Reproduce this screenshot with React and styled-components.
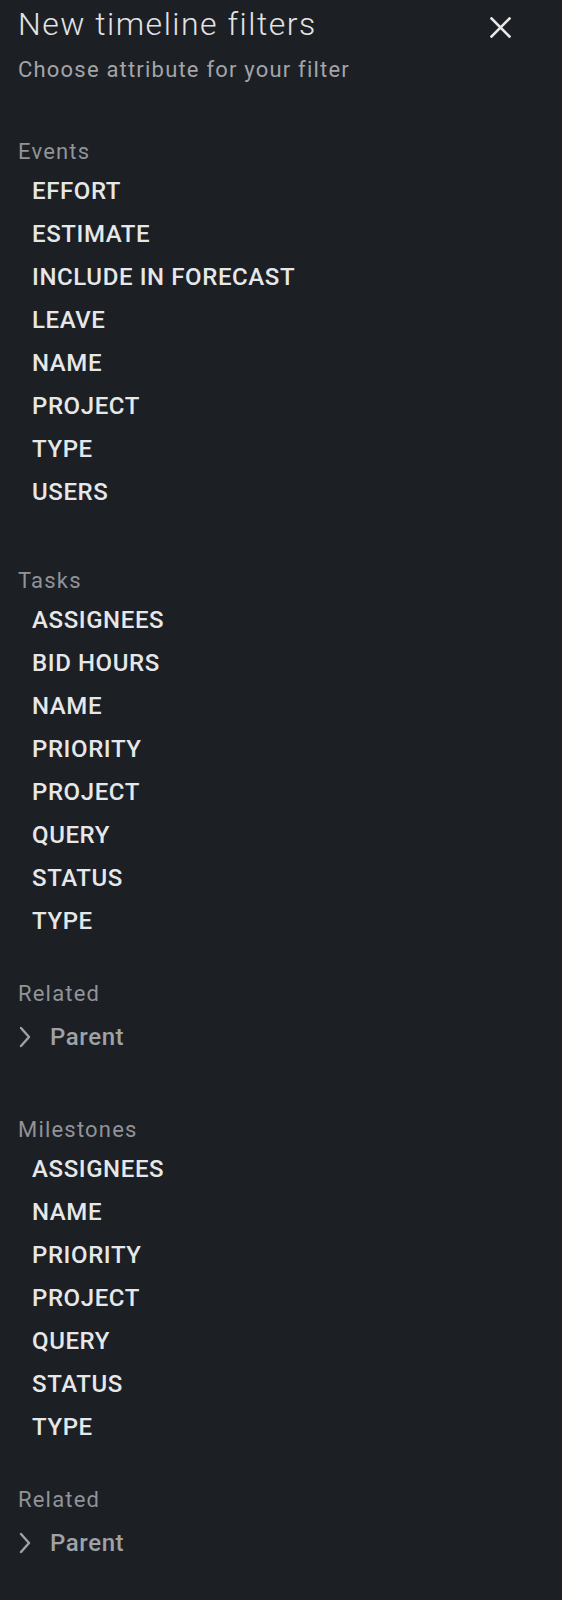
import React from 'react'
import styled, { createGlobalStyle } from 'styled-components'

const GlobalStyle = createGlobalStyle`
  html, body {
    margin: 0;
    padding: 0;
    background: #1c1f24;
  }
  body {
    font-family: Roboto, "Liberation Sans", sans-serif;
  }
`;

const Panel = styled.div`
  width: 562px;
  min-height: 1600px;
  box-sizing: border-box;
  padding: 4px 0 0 18px;
  background: #1c1f24;
  color: #e6e6e6;
`;

const Header = styled.div`
  display: flex;
  justify-content: space-between;
  align-items: flex-start;
`;

const Title = styled.h1`
  margin: 0;
  font-size: 32px;
  line-height: 40px;
  font-weight: 300;
  letter-spacing: 1.5px;
  color: #e2e3e5;
`;

const Subtitle = styled.p`
  margin: 12px 0 0;
  font-size: 22px;
  line-height: 28px;
  font-weight: 400;
  letter-spacing: 1.2px;
  color: #a3a5a9;
`;

const CloseButton = styled.button`
  display: flex;
  align-items: center;
  justify-content: center;
  width: 38px;
  height: 38px;
  margin: 4px 43px 0 0;
  padding: 0;
  border: none;
  background: transparent;
  color: #e8e8e8;
  cursor: pointer;
`;

const Section = styled.section`
  margin-top: ${({ $gap }) => $gap}px;
`;

const SectionLabel = styled.div`
  font-size: 22px;
  line-height: 36px;
  font-weight: 400;
  letter-spacing: 1.2px;
  color: #909397;
`;

const List = styled.ul`
  list-style: none;
  margin: 0;
  padding: 0 0 0 14px;
`;

const Item = styled.li`
  font-size: 24px;
  line-height: 43px;
  font-weight: 500;
  letter-spacing: 0.6px;
  color: #e6e7e9;
  cursor: pointer;
`;

const Related = styled.div`
  margin-top: 33px;
  padding-bottom: 5px;
`;

const ParentRow = styled.div`
  display: flex;
  align-items: center;
  gap: 18px;
  margin-top: 3px;
  height: 43px;
  font-size: 24px;
  font-weight: 500;
  letter-spacing: 0.6px;
  color: #a0a2a6;
  cursor: pointer;
`;

const Chevron = () => (
  <svg width="14" height="22" viewBox="0 0 14 22" fill="none">
    <path d="M3 2 L11 11 L3 20" stroke="#a0a2a6" strokeWidth="2.4" strokeLinecap="round" strokeLinejoin="round" />
  </svg>
);

const CloseIcon = () => (
  <svg width="21" height="21" viewBox="0 0 21 21" fill="none">
    <path d="M1.5 1.5 L19.5 19.5 M19.5 1.5 L1.5 19.5" stroke="currentColor" strokeWidth="2.6" strokeLinecap="square" />
  </svg>
);

const sections = [
  {
    name: 'Events',
    items: ['EFFORT', 'ESTIMATE', 'INCLUDE IN FORECAST', 'LEAVE', 'NAME', 'PROJECT', 'TYPE', 'USERS'],
    related: false,
  },
  {
    name: 'Tasks',
    items: ['ASSIGNEES', 'BID HOURS', 'NAME', 'PRIORITY', 'PROJECT', 'QUERY', 'STATUS', 'TYPE'],
    related: true,
  },
  {
    name: 'Milestones',
    items: ['ASSIGNEES', 'NAME', 'PRIORITY', 'PROJECT', 'QUERY', 'STATUS', 'TYPE'],
    related: true,
  },
];

export default function App() {
  return (
    <>
      <GlobalStyle />
      <Panel>
        <Header>
          <div>
            <Title>New timeline filters</Title>
            <Subtitle>Choose attribute for your filter</Subtitle>
          </div>
          <CloseButton aria-label="Close">
            <CloseIcon />
          </CloseButton>
        </Header>

        {sections.map((s, i) => (
          <Section key={s.name} $gap={i === 0 ? 50 : 49}>
            <SectionLabel>{s.name}</SectionLabel>
            <List>
              {s.items.map((it) => (
                <Item key={it}>{it}</Item>
              ))}
            </List>
            {s.related && (
              <Related>
                <SectionLabel>Related</SectionLabel>
                <ParentRow>
                  <Chevron />
                  Parent
                </ParentRow>
              </Related>
            )}
          </Section>
        ))}
      </Panel>
    </>
  )
}
